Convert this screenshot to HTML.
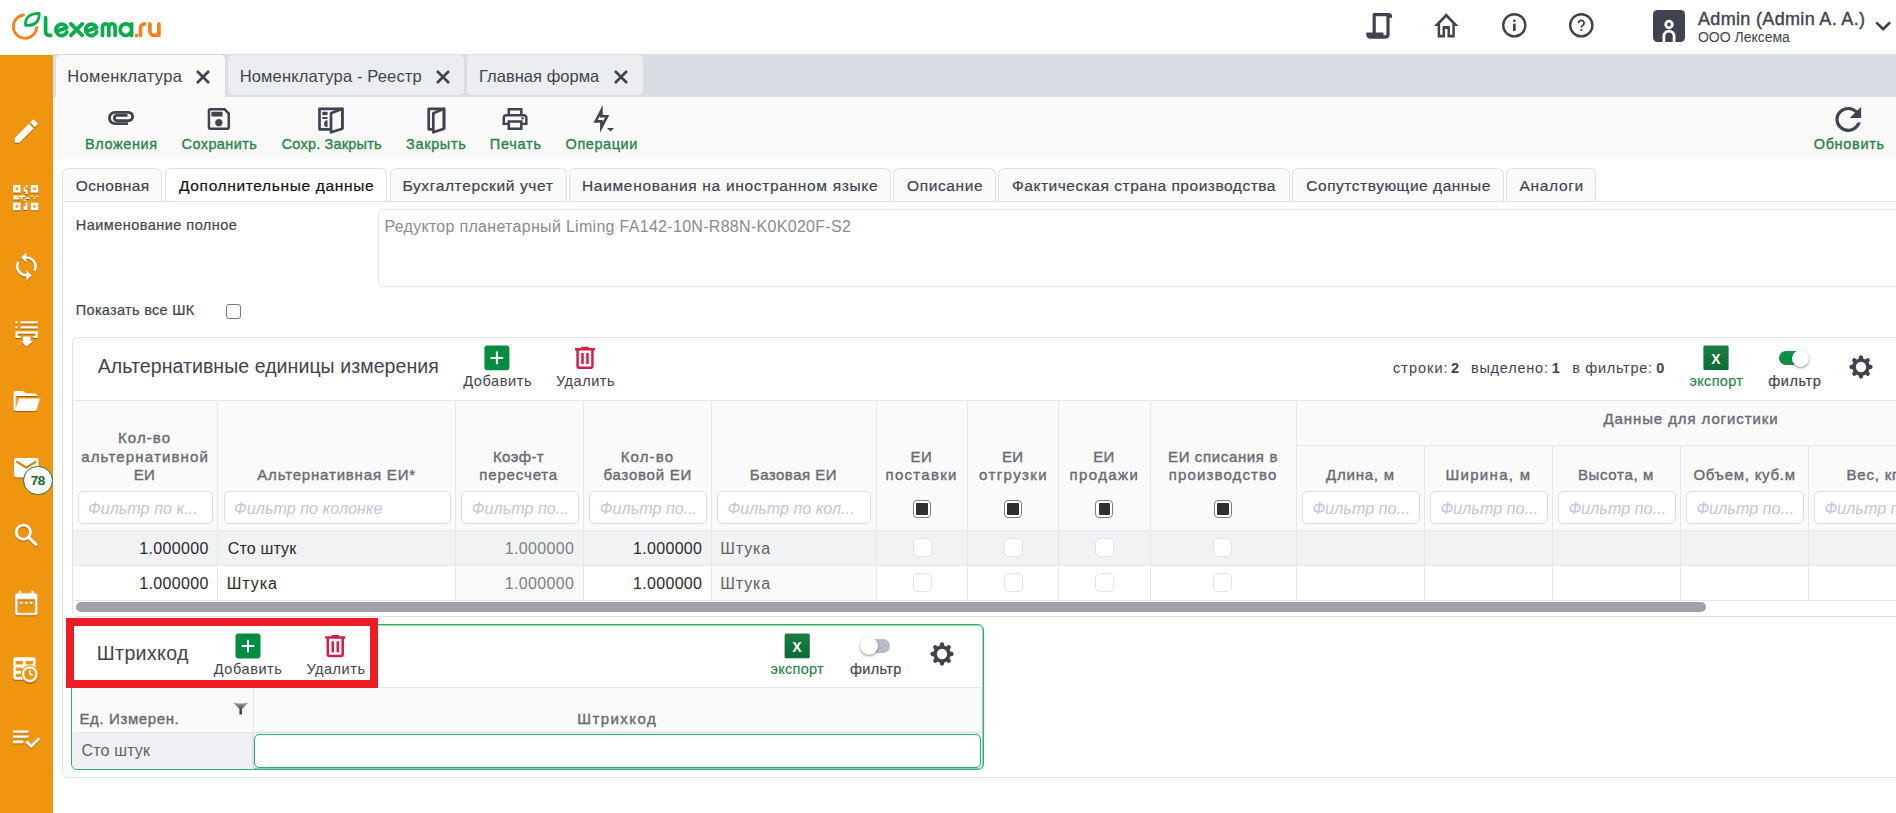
<!DOCTYPE html>
<html lang="ru">
<head>
<meta charset="utf-8">
<title>Lexema</title>
<style>
*{box-sizing:border-box;margin:0;padding:0}
html,body{width:1896px;height:813px;overflow:hidden;background:#fff}
body{font-family:"Liberation Sans",sans-serif;color:#3f4350;position:relative;font-size:14px}
.a{position:absolute}
.t{position:absolute;white-space:nowrap;line-height:1}
svg{position:absolute;display:block;overflow:visible}
#side{left:0;top:55px;width:53px;height:758px;background:#f0950f}
#side svg{filter:drop-shadow(0.9px 1px 0.4px rgba(105,58,0,.6))}
#tabbar{left:53px;top:54px;width:1843px;height:43px;background:#dadde3}
.tab{position:absolute;top:55px;height:40px;border-radius:4.5px;background:#ecedf1}
.tab.act{background:#f9f9f9;height:42px;border-radius:4.5px 4.5px 0 0}
#tool{left:53px;top:97px;width:1843px;height:62px;background:#f9f9f9}
.st{position:absolute;top:168px;height:34px;border:1px solid #dfe1ea;border-bottom:none;border-radius:6px 6px 0 0;background:#fafafb}
.st.act{background:#fff}
.fi{position:absolute;height:33px;border:1px solid #dadde8;border-radius:5px;background:#fff}
.vl{position:absolute;width:1px;background:#e6e7ee}
.hl{position:absolute;height:1px;background:#e6e7ee}
.cb{position:absolute;width:19px;height:19px;border:1px solid #e1e3ea;border-radius:5px;background:#fff}
.hcb{position:absolute;width:18px;height:18px;border:1.3px solid #7d7d7d;border-radius:4px;background:#fff}
.hcb:after{content:"";position:absolute;left:2.2px;top:2.2px;right:2.2px;bottom:2.2px;background:#303030;border-radius:1px}
</style>
</head>
<body>
<div id="side" class="a">
<svg style="left:0;top:0" width="1" height="1"><path fill="#fff" transform="translate(10.87 60.87) scale(1.2778 1.2778)" d="M20.71,7.04C21.1,6.65 21.1,6 20.71,5.63L18.37,3.29C18,2.9 17.35,2.9 16.96,3.29L15.12,5.12L18.87,8.87M3,17.25V21H6.75L17.81,9.93L14.06,6.18L3,17.25Z"/></svg>
<svg style="left:13.4px;top:130.4px" width="25.4" height="25.4" viewBox="0 0 25.4 25.4"><g fill="#fff"><rect x="0" y="0" width="7.6" height="7.6"/><rect x="2.6" y="2.6" width="2.4" height="2.4" fill="#f0950f"/><rect x="17.7" y="0" width="7.6" height="7.6"/><rect x="20.3" y="2.6" width="2.4" height="2.4" fill="#f0950f"/><rect x="0" y="17.7" width="7.6" height="7.6"/><rect x="2.6" y="20.3" width="2.4" height="2.4" fill="#f0950f"/><rect x="17.7" y="17.7" width="7.6" height="7.6"/><rect x="20.3" y="20.3" width="2.4" height="2.4" fill="#f0950f"/><path d="M12.6 0.4h2.1v2.1h-2.1zM10.6 2.5h2v2.2h2v4.3h-2.1v-2.2h-1.9zM0.2 10.6h4.3v2h2v1.8H0.2zM5.5 10.6h6.5v1.7H9.4v2H7.7v-2H5.5zM12.4 12.5h4.2v1.6h-4.2zM10.5 14.5h2.3v1.8h-2.3zM18.2 10.6h1.7v1.7h-1.7zM20.6 12.6h1.7v1.7h-1.7zM23.2 10.6h1.7v1.7h-1.7zM12.4 17.5h2.1v7.4H10.5v-3.7h1.9z"/></g></svg>
<svg style="left:0;top:0" width="1" height="1"><path fill="#fff" transform="translate(10.65 196.12) scale(1.3125 1.2773)" d="M12,18A6,6 0 0,1 6,12C6,11 6.25,10.03 6.7,9.2L5.24,7.74C4.46,8.97 4,10.43 4,12A8,8 0 0,0 12,20V23L16,19L12,15M12,4V1L8,5L12,9V6A6,6 0 0,1 18,12C18,13 17.75,13.97 17.3,14.8L18.76,16.26C19.54,15.03 20,13.57 20,12A8,8 0 0,0 12,4Z"/></svg>
<svg style="left:0;top:0" width="1" height="1"><path fill="#fff" transform="translate(11 331) scale(1.2494 1.25)" d="M19,20H4C2.89,20 2,19.1 2,18V6C2,4.89 2.89,4 4,4H10L12,6H19A2,2 0 0,1 21,8H21L4,8V18L6.14,10H23.21L20.93,18.5C20.7,19.37 19.92,20 19,20Z"/></svg>
<svg style="left:0;top:0" width="1" height="1"><path fill="#fff" transform="translate(11.54 398.1) scale(1.23 1.225)" d="M20,8L12,13L4,8V6L12,11L20,6M20,4H4C2.89,4 2,4.89 2,6V18A2,2 0 0,0 4,20H20A2,2 0 0,0 22,18V6C22,4.89 21.1,4 20,4Z"/></svg>
<svg style="left:0;top:0" width="1" height="1"><circle cx="23.4" cy="477.20000000000005" r="7.1" fill="none" stroke="#fff" stroke-width="2.8"/><path d="M28.5 482.29999999999995L36.9 490.4" stroke="#fff" stroke-width="3.1"/></svg>
<svg style="left:0;top:0" width="1" height="1"><path fill="#fff" transform="translate(11.48 533.24) scale(1.2389 1.23)" d="M9 11H7v2h2v-2zm4 0h-2v2h2v-2zm4 0h-2v2h2v-2zm2-7h-1V2h-2v2H8V2H6v2H5c-1.11 0-1.99.9-1.99 2L3 20c0 1.1.89 2 2 2h14c1.1 0 2-.9 2-2V6c0-1.1-.9-2-2-2zm0 16H5V9h14v11z"/></svg>
<svg style="left:0;top:0" width="1" height="1"><path fill="#fff" transform="translate(10.41 667.91) scale(1.2952 1.2643)" d="M14 10H2v2h12v-2zm0-4H2v2h12V6zM2 16h8v-2H2v2zm19.5-4.5L23 13l-6.99 7-4.51-4.5L13 14l3.01 3 5.49-5.5z"/></svg>
<svg style="left:14.5px;top:265.5px" width="23.5" height="26" viewBox="0 0 23.5 26"><g fill="#fff"><rect x="0.4" y="0.3" width="2.2" height="2.2"/><rect x="5.5" y="0.3" width="17.3" height="2.2"/><rect x="0.4" y="5.3" width="2.2" height="2.2"/><rect x="5.5" y="5.3" width="17.3" height="2.2"/><path d="M0.4 10.2H22.8V17.1H17.9V14.9H20.3V12.7H2.9V14.9H5.8V17.1H0.4Z"/><path d="M8 15.4H15.6V20.3H17.9L11.7 25.7L5.8 20.3H8Z"/></g></svg>
<svg style="left:13.3px;top:602.3px" width="26" height="26" viewBox="0 0 26 26"><rect x="0.3" y="0.3" width="22.4" height="22.4" rx="2.2" fill="#fff"/><g fill="#f0950f"><rect x="2.8" y="4" width="7.1" height="3.4"/><rect x="12.9" y="4" width="7.1" height="3.4"/><rect x="2.8" y="10.6" width="6.5" height="3.2"/><rect x="2.8" y="16.8" width="5.3" height="3.2"/><circle cx="16.8" cy="17.1" r="9"/></g><circle cx="16.8" cy="17.1" r="6.8" fill="none" stroke="#fff" stroke-width="2.2"/><path d="M16.8 13V16.7L19.7 18.4" fill="none" stroke="#fff" stroke-width="1.6"/></svg>
<div class="a" style="left:23px;top:410.8px;width:29.5px;height:29.5px;border-radius:50%;background:#fff;border:1.3px solid #1b6e2d"></div>
</div>
<div id="tabbar" class="a"></div>
<div id="tool" class="a"></div>

<!-- TABS -->
<div class="tab act" style="left:56px;width:169px"></div>
<div class="tab" style="left:228px;width:236px"></div>
<div class="tab" style="left:467px;width:176px"></div>

<!-- SUBTABS -->
<div class="st" style="left:62px;width:100px"></div>
<div class="st act" style="left:165px;width:222px"></div>
<div class="st" style="left:390px;width:177px"></div>
<div class="st" style="left:569px;width:322px"></div>
<div class="st" style="left:893px;width:103px"></div>
<div class="st" style="left:998px;width:292px"></div>
<div class="st" style="left:1292px;width:212px"></div>
<div class="st" style="left:1506px;width:90px"></div>

<!-- CONTENT PANEL -->
<div class="a" style="left:62px;top:201px;width:1900px;height:577px;border:1px solid #dfe1ea;border-radius:0 0 0 6px;background:#fff"></div>
<!-- textarea -->
<div class="a" style="left:378px;top:209px;width:1600px;height:78px;border:1px solid #e3e5ec;border-radius:5px;background:#fff"></div>
<!-- checkbox -->
<div class="a" style="left:226px;top:303.5px;width:15px;height:15px;border:1.3px solid #767676;border-radius:3px;background:#fff"></div>

<!-- GRID 1 -->
<div class="a" style="left:72px;top:337px;width:1900px;height:280px;border:1px solid #dfe1ea;border-radius:6px;background:#fff"></div>
<div class="a" style="left:73px;top:400px;width:1823px;height:130px;background:#fafafa"></div>
<div class="a" style="left:73px;top:530px;width:1823px;height:35px;background:#f1f2f4"></div>
<div class="a" style="left:455px;top:565px;width:128px;height:35px;background:#f9f9fa"></div>
<div class="a" style="left:711px;top:565px;width:165px;height:35px;background:#f9f9fa"></div>
<div class="hl" style="left:73px;top:400px;width:1823px"></div>
<div class="hl" style="left:1296px;top:445px;width:600px"></div>
<div class="hl" style="left:73px;top:530px;width:1823px"></div>
<div class="hl" style="left:73px;top:565px;width:1823px"></div>
<div class="hl" style="left:73px;top:600px;width:1823px"></div>
<div class="vl" style="left:217px;top:401px;height:199px"></div>
<div class="vl" style="left:455px;top:401px;height:199px"></div>
<div class="vl" style="left:583px;top:401px;height:199px"></div>
<div class="vl" style="left:711px;top:401px;height:199px"></div>
<div class="vl" style="left:876px;top:401px;height:199px"></div>
<div class="vl" style="left:967px;top:401px;height:199px"></div>
<div class="vl" style="left:1058px;top:401px;height:199px"></div>
<div class="vl" style="left:1150px;top:401px;height:199px"></div>
<div class="vl" style="left:1296px;top:401px;height:199px"></div>
<div class="vl" style="left:1424px;top:446px;height:154px"></div>
<div class="vl" style="left:1552px;top:446px;height:154px"></div>
<div class="vl" style="left:1680px;top:446px;height:154px"></div>
<div class="vl" style="left:1808px;top:446px;height:154px"></div>
<!-- scrollbar -->
<div class="a" style="left:76px;top:602px;width:1630px;height:10px;border-radius:5px;background:#9fa2ac"></div>
<div class="fi" style="left:78.0px;top:491px;width:135.0px"></div>
<div class="fi" style="left:224.0px;top:491px;width:226.5px"></div>
<div class="fi" style="left:461.0px;top:491px;width:118.0px"></div>
<div class="fi" style="left:589.0px;top:491px;width:118.0px"></div>
<div class="fi" style="left:717.0px;top:491px;width:154.0px"></div>
<div class="fi" style="left:1302.0px;top:491px;width:118.0px"></div>
<div class="fi" style="left:1430.0px;top:491px;width:118.0px"></div>
<div class="fi" style="left:1558.0px;top:491px;width:118.0px"></div>
<div class="fi" style="left:1686.0px;top:491px;width:118.0px"></div>
<div class="fi" style="left:1814.0px;top:491px;width:118.0px"></div>
<div class="hcb" style="left:913.0px;top:500.3px"></div>
<div class="cb" style="left:912.5px;top:538.3px"></div>
<div class="cb" style="left:912.5px;top:573.3px"></div>
<div class="hcb" style="left:1004.2px;top:500.3px"></div>
<div class="cb" style="left:1003.7px;top:538.3px"></div>
<div class="cb" style="left:1003.7px;top:573.3px"></div>
<div class="hcb" style="left:1095.4px;top:500.3px"></div>
<div class="cb" style="left:1094.9px;top:538.3px"></div>
<div class="cb" style="left:1094.9px;top:573.3px"></div>
<div class="hcb" style="left:1213.8px;top:500.3px"></div>
<div class="cb" style="left:1213.3px;top:538.3px"></div>
<div class="cb" style="left:1213.3px;top:573.3px"></div>

<!-- GRID 2 (barcode) -->
<div class="a" style="left:71px;top:624px;width:913px;height:146px;border:1px solid #2fae67;border-radius:6px;background:#fff;box-shadow:inset 0 0 0 0.45px #2fae67"></div>
<div class="a" style="left:72px;top:688px;width:909px;height:45px;background:#fafafa"></div>
<div class="a" style="left:72px;top:733px;width:182px;height:36px;background:#f0f1f4;border-radius:0 0 0 5px"></div>
<div class="hl" style="left:73px;top:687px;width:908px"></div>
<div class="hl" style="left:73px;top:732px;width:908px"></div>
<div class="vl" style="left:253px;top:688px;height:80px"></div>
<div class="vl" style="left:981px;top:688px;height:45px"></div>
<div class="a" style="left:254px;top:733.5px;width:727px;height:34px;border:1.3px solid #2fae67;border-radius:5px;background:#fff;box-shadow:0 0 0 2.5px rgba(120,150,220,.13), inset 0 0 3px rgba(120,150,220,.25)"></div>
<!-- red highlight -->
<div class="a" style="left:66px;top:618px;width:312px;height:70px;border:8px solid #ec1c24"></div>

<svg style="left:12px;top:11px" width="152" height="31" viewBox="0 0 152 31">
<g fill="none" stroke-linecap="round" stroke-linejoin="round">
<path d="M11.5 4A11.7 11.7 0 1 0 24.7 16.5" stroke="#f58220" stroke-width="2.8"/>
<path d="M13.6 14.3C12.6 7 17.2 2.6 27.2 2.4C27.7 10 23 15.4 13.6 14.3Z" stroke="#0bab4d" stroke-width="2.8"/>
<g stroke="#0bab4d" stroke-width="3.7">
<path d="M33.6 6.7V20.6Q33.6 24.4 37.4 24.4H38.6"/>
<path d="M44 20.6L54.8 16.7A5.7 5.7 0 1 0 54.9 20.9"/>
<path d="M58.9 12.9L70.3 24.4M70.3 12.9L58.9 24.4"/>
<path d="M73.8 20.6L84.6 16.7A5.7 5.7 0 1 0 84.7 20.9"/>
<path d="M90.5 24.4V16A3.15 3.15 0 0 1 96.8 16V24.4M96.8 16A3.15 3.15 0 0 1 103.1 16V24.4"/>
<path d="M119.6 12.9V24.4M119.6 18.6A5.7 5.7 0 1 0 119.6 18.7"/>
</g>
<g stroke="#f58220" stroke-width="3.7">
<path d="M128.5 24.4V17.1A4.2 4.2 0 0 1 132.6 12.9"/>
<path d="M137.9 12.9V19.9A4.5 4.5 0 0 0 146.9 19.9M146.9 12.9V24.4"/>
</g></g>
<rect x="122.8" y="22.8" width="3.3" height="3.5" fill="#f58220"/>
</svg>
<svg style="left:1366px;top:13px" width="26.5" height="25.5" viewBox="0 0 26.5 25.5"><g fill="none" stroke="#40434f" stroke-width="3.2" stroke-linejoin="round" stroke-linecap="round"><path d="M24.6 3.5A1.8 1.8 0 0 0 22.8 1.7H8.2V19.5"/><path d="M22 1.7V21.5A2.3 2.3 0 0 1 19.7 23.8H4"/></g><path d="M0.3 19.5H17.5V21.5A2.3 2.3 0 0 0 19.8 23.8V25.4H4.3A4 4 0 0 1 0.3 21.4Z" fill="#40434f"/></svg>
<svg style="left:0;top:0" width="1" height="1"><path fill="#40434f" transform="translate(1431.55 9.03) scale(1.225 1.4235)" d="M12 5.69L17 10.19V18H15V12H9V18H7V10.19L12 5.69M12 3L2 12H5V20H11V14H13V20H19V12H22"/></svg>
<svg style="left:1501.7px;top:13.3px" width="24.6" height="24.6" viewBox="0 0 24.6 24.6"><circle cx="12.3" cy="12.3" r="11.1" fill="none" stroke="#40434f" stroke-width="2.4"/><rect x="11" y="10.6" width="2.7" height="7.4" fill="#40434f"/><rect x="11" y="6.4" width="2.7" height="2.7" rx="1.3" fill="#40434f"/></svg>
<svg style="left:1568.8px;top:13.3px" width="24.6" height="24.6" viewBox="0 0 24.6 24.6"><circle cx="12.3" cy="12.3" r="11.1" fill="none" stroke="#40434f" stroke-width="2.4"/><path d="M9.6 10.2A2.7 2.7 0 1 1 13.6 12.4C12.6 13 12.3 13.5 12.3 14.6" fill="none" stroke="#40434f" stroke-width="1.7"/><rect x="11.4" y="16" width="1.8" height="1.9" fill="#40434f"/></svg>
<div class="a" style="left:1653px;top:10px;width:32px;height:32px;border-radius:4.5px;background:#40434f"></div>
<svg style="left:1653px;top:10px" width="32" height="32" viewBox="0 0 32 32"><g fill="none" stroke="#fff" stroke-width="2.8"><circle cx="16" cy="14.5" r="3.3"/><path d="M10.9 32V26.2a5.1 5.1 0 0 1 10.2 0V32"/></g></svg>
<svg style="left:0;top:0" width="1" height="1"><path fill="#40434f" transform="translate(1867.45 10.3) scale(1.3083 1.2938)" d="M7.41,8.58L12,13.17L16.59,8.58L18,10L12,16L6,10L7.41,8.58Z"/></svg>
<svg style="left:196.4px;top:69.5px" width="14" height="14" viewBox="0 0 14 14"><path d="M1 1L13 13M13 1L1 13" stroke="#40434f" stroke-width="2.7" fill="none"/></svg>
<svg style="left:436.4px;top:69.5px" width="14" height="14" viewBox="0 0 14 14"><path d="M1 1L13 13M13 1L1 13" stroke="#40434f" stroke-width="2.7" fill="none"/></svg>
<svg style="left:614.2px;top:69.5px" width="14" height="14" viewBox="0 0 14 14"><path d="M1 1L13 13M13 1L1 13" stroke="#40434f" stroke-width="2.7" fill="none"/></svg>
<svg style="left:108px;top:111px" width="26" height="14" viewBox="0 0 26 14"><path d="M20 12.6H7A5.6 5.6 0 0 1 7 1.4H20.5A4.1 4.1 0 0 1 20.5 9.6H9A2.6 2.6 0 0 1 9 4.4H19.5" fill="none" stroke="#40434f" stroke-width="2.8"/></svg>
<svg style="left:0;top:0" width="1" height="1"><path fill="#40434f" transform="translate(203.98 104.33) scale(1.2389 1.2222)" d="M17 3H5C3.89 3 3 3.9 3 5V19C3 20.1 3.89 21 5 21H19C20.1 21 21 20.1 21 19V7L17 3M19 19H5V5H16.17L19 7.83V19M12 12C10.34 12 9 13.34 9 15S10.34 18 12 18 15 16.66 15 15 13.66 12 12 12M6 6H15V10H6V6Z"/></svg>
<svg style="left:318px;top:106.5px" width="26" height="26.5" viewBox="0 0 26 26.5"><g fill="none" stroke="#40434f" stroke-width="2.7" stroke-linejoin="round"><path d="M12.5 22.3H1.5V1.8H24.3V21.8"/><path d="M13 6.3L24.3 1.8V21.8L13 25.3Z" fill="#f9f9f9"/></g><g fill="#40434f"><rect x="4.3" y="4.8" width="5.2" height="3.4"/><rect x="4.3" y="10" width="5.2" height="2"/><path d="M9.5 13.3a3.4 3.4 0 0 0 0 6.8z"/></g></svg>
<svg style="left:426.5px;top:106.5px" width="19" height="26.5" viewBox="0 0 19 26.5"><g fill="none" stroke="#40434f" stroke-width="2.7" stroke-linejoin="round"><path d="M6 22.3H1.7V1.8H17V21.8"/><path d="M6.3 6.3L17 1.8V21.8L6.3 25.3Z"/></g></svg>
<svg style="left:0;top:0" width="1" height="1"><path fill="#40434f" transform="translate(499.99 104.33) scale(1.255 1.2222)" d="M19 8C20.66 8 22 9.34 22 11V17H18V21H6V17H2V11C2 9.34 3.34 8 5 8H6V3H18V8H19M8 5V8H16V5H8M16 19V15H8V19H16M18 15H20V11C20 10.45 19.55 10 19 10H5C4.45 10 4 10.45 4 11V15H6V13H18V15M19 11.5C19 12.05 18.55 12.5 18 12.5C17.45 12.5 17 12.05 17 11.5C17 10.95 17.45 10.5 18 10.5C18.55 10.5 19 10.95 19 11.5Z"/></svg>
<svg style="left:0;top:0" width="1" height="1"><path fill="#40434f" transform="translate(585.6 103.74) scale(1.3167 1.2591)" d="M11 9.47V11H14.76L13 14.53V13H9.24L11 9.47M13 1L6 15H11V23L18 9H13V1Z"/></svg>
<svg style="left:607px;top:128px" width="7" height="3.5" viewBox="0 0 7 3.5"><path d="M0 0H7L3.5 3.5Z" fill="#40434f"/></svg>
<svg style="left:0;top:0" width="1" height="1"><path fill="#40434f" transform="translate(1828.98 100.62) scale(1.6062 1.5687)" d="M17.65,6.35C16.2,4.9 14.21,4 12,4A8,8 0 0,0 4,12A8,8 0 0,0 12,20C15.73,20 18.84,17.45 19.73,14H17.65C16.83,16.33 14.61,18 12,18A6,6 0 0,1 6,12A6,6 0 0,1 12,6C13.66,6 15.14,6.69 16.22,7.78L13,11H20V4L17.65,6.35Z"/></svg>
<svg style="left:484px;top:345px" width="27" height="27" viewBox="0 0 27 27"><g transform="translate(0.4 0.5)"><rect width="25" height="24.8" rx="3" fill="#048c42"/><path d="M6.2 12.4H18.8M12.5 6.1V18.7" stroke="#fff" stroke-width="2"/></g></svg>
<svg style="left:235px;top:633px" width="27" height="27" viewBox="0 0 27 27"><g transform="translate(0.5 0.6)"><rect width="25" height="24.8" rx="3" fill="#048c42"/><path d="M6.2 12.4H18.8M12.5 6.1V18.7" stroke="#fff" stroke-width="2"/></g></svg>
<svg style="left:0;top:0" width="1" height="1"><path fill="#d81b48" transform="translate(570.15 342.97) scale(1.2375 1.2444)" d="M9,3V4H4V6H5V19A2,2 0 0,0 7,21H17A2,2 0 0,0 19,19V6H20V4H15V3H9M7,6H17V19H7V6M9,8V17H11V8H9M13,8V17H15V8H13Z"/></svg>
<svg style="left:0;top:0" width="1" height="1"><path fill="#d81b48" transform="translate(320.33 631.28) scale(1.2437 1.2389)" d="M9,3V4H4V6H5V19A2,2 0 0,0 7,21H17A2,2 0 0,0 19,19V6H20V4H15V3H9M7,6H17V19H7V6M9,8V17H11V8H9M13,8V17H15V8H13Z"/></svg>
<svg style="left:1703px;top:345px" width="27" height="27" viewBox="0 0 27 27"><defs><linearGradient id="g1703" x1="0" y1="0" x2="0" y2="1"><stop offset="0" stop-color="#1b7d44"/><stop offset="1" stop-color="#0c6b38"/></linearGradient></defs><rect x="0.4" y="0.4" width="25.2" height="24.7" rx="1.5" fill="url(#g1703)"/></svg>
<svg style="left:784px;top:633px" width="27" height="27" viewBox="0 0 27 27"><defs><linearGradient id="g784" x1="0" y1="0" x2="0" y2="1"><stop offset="0" stop-color="#1b7d44"/><stop offset="1" stop-color="#0c6b38"/></linearGradient></defs><rect x="0.6" y="0.6" width="25.2" height="24.7" rx="1.5" fill="url(#g784)"/></svg>
<div class="a" style="left:1779px;top:351.2px;width:28px;height:14.2px;border-radius:7.1px;background:linear-gradient(90deg,#0a8c43,#13964d)"></div>
<div class="a" style="left:1791.6px;top:349.7px;width:17.3px;height:17.3px;border-radius:50%;background:#fff;box-shadow:0 1px 2.5px rgba(0,0,0,.45)"></div>
<div class="a" style="left:862px;top:639px;width:28px;height:13.5px;border-radius:7px;background:#b9bcc6"></div>
<div class="a" style="left:859.5px;top:636.5px;width:18px;height:18px;border-radius:50%;background:#fff;box-shadow:0 1px 2.5px rgba(0,0,0,.45)"></div>
<svg style="left:1861px;top:366.9px" width="1" height="1"><g fill="none" stroke="#40434f"><circle r="7" stroke-width="3.7"/><g stroke-width="4.3" stroke-linecap="round"><path d="M0 -8.6V-9.5" transform="rotate(0)"/><path d="M0 -8.6V-9.5" transform="rotate(45)"/><path d="M0 -8.6V-9.5" transform="rotate(90)"/><path d="M0 -8.6V-9.5" transform="rotate(135)"/><path d="M0 -8.6V-9.5" transform="rotate(180)"/><path d="M0 -8.6V-9.5" transform="rotate(225)"/><path d="M0 -8.6V-9.5" transform="rotate(270)"/><path d="M0 -8.6V-9.5" transform="rotate(315)"/></g></g></svg>
<svg style="left:941.9px;top:654px" width="1" height="1"><g fill="none" stroke="#40434f"><circle r="7" stroke-width="3.7"/><g stroke-width="4.3" stroke-linecap="round"><path d="M0 -8.6V-9.5" transform="rotate(0)"/><path d="M0 -8.6V-9.5" transform="rotate(45)"/><path d="M0 -8.6V-9.5" transform="rotate(90)"/><path d="M0 -8.6V-9.5" transform="rotate(135)"/><path d="M0 -8.6V-9.5" transform="rotate(180)"/><path d="M0 -8.6V-9.5" transform="rotate(225)"/><path d="M0 -8.6V-9.5" transform="rotate(270)"/><path d="M0 -8.6V-9.5" transform="rotate(315)"/></g></g></svg>
<svg style="left:232.8px;top:702.2px" width="15.4" height="12.8" viewBox="0 0 15.4 12.8"><defs><linearGradient id="fg" x1="0" y1="0" x2="0" y2="1"><stop offset="0" stop-color="#a4a7ac"/><stop offset="0.45" stop-color="#5b5e64"/><stop offset="1" stop-color="#2f3237"/></linearGradient></defs><path d="M0.2 0.4Q7.7 2.6 15.2 0.4L9 6.9V12.6H6.4V6.9Z" fill="url(#fg)"/></svg>
<span class="t" style="left:1698.0px;top:9.7px;font-size:18px;color:#3f4350;letter-spacing:0.33px;-webkit-text-stroke:0.4px currentColor;">Admin (Admin A. A.)</span>
<span class="t" style="left:1698.0px;top:30.1px;font-size:14px;color:#3f4350;letter-spacing:-0.02px;">ООО Лексема</span>
<span class="t" style="left:67.3px;top:68.0px;font-size:16.5px;color:#3f4350;letter-spacing:0.36px;">Номенклатура</span>
<span class="t" style="left:239.7px;top:68.0px;font-size:16.5px;color:#3f4350;letter-spacing:0.15px;">Номенклатура - Реестр</span>
<span class="t" style="left:479.0px;top:68.0px;font-size:16.5px;color:#3f4350;letter-spacing:0.03px;">Главная форма</span>
<span class="t" style="left:85.0px;top:137.3px;font-size:14.5px;color:#2b8447;letter-spacing:0.59px;-webkit-text-stroke:0.35px currentColor;">Вложения</span>
<span class="t" style="left:181.6px;top:137.3px;font-size:14.5px;color:#2b8447;letter-spacing:0.39px;-webkit-text-stroke:0.35px currentColor;">Сохранить</span>
<span class="t" style="left:281.7px;top:137.3px;font-size:14.5px;color:#2b8447;letter-spacing:0.19px;-webkit-text-stroke:0.35px currentColor;">Сохр. Закрыть</span>
<span class="t" style="left:406.1px;top:137.3px;font-size:14.5px;color:#2b8447;letter-spacing:0.63px;-webkit-text-stroke:0.35px currentColor;">Закрыть</span>
<span class="t" style="left:489.7px;top:137.3px;font-size:14.5px;color:#2b8447;letter-spacing:0.77px;-webkit-text-stroke:0.35px currentColor;">Печать</span>
<span class="t" style="left:565.6px;top:137.3px;font-size:14.5px;color:#2b8447;letter-spacing:0.55px;-webkit-text-stroke:0.35px currentColor;">Операции</span>
<span class="t" style="left:1813.7px;top:137.3px;font-size:14.5px;color:#2b8447;letter-spacing:0.67px;-webkit-text-stroke:0.35px currentColor;">Обновить</span>
<span class="t" style="left:75.7px;top:178.2px;font-size:15.5px;color:#3f4350;letter-spacing:0.39px;-webkit-text-stroke:0.2px currentColor;">Основная</span>
<span class="t" style="left:179.0px;top:178.2px;font-size:15.5px;color:#111;letter-spacing:0.65px;-webkit-text-stroke:0.2px currentColor;">Дополнительные данные</span>
<span class="t" style="left:402.5px;top:178.2px;font-size:15.5px;color:#3f4350;letter-spacing:0.63px;-webkit-text-stroke:0.2px currentColor;">Бухгалтерский учет</span>
<span class="t" style="left:582.0px;top:178.2px;font-size:15.5px;color:#3f4350;letter-spacing:0.68px;-webkit-text-stroke:0.2px currentColor;">Наименования на иностранном языке</span>
<span class="t" style="left:907.0px;top:178.2px;font-size:15.5px;color:#3f4350;letter-spacing:0.61px;-webkit-text-stroke:0.2px currentColor;">Описание</span>
<span class="t" style="left:1012.0px;top:178.2px;font-size:15.5px;color:#3f4350;letter-spacing:0.52px;-webkit-text-stroke:0.2px currentColor;">Фактическая страна производства</span>
<span class="t" style="left:1306.3px;top:178.2px;font-size:15.5px;color:#3f4350;letter-spacing:0.53px;-webkit-text-stroke:0.2px currentColor;">Сопутствующие данные</span>
<span class="t" style="left:1519.4px;top:178.2px;font-size:15.5px;color:#3f4350;letter-spacing:0.70px;-webkit-text-stroke:0.2px currentColor;">Аналоги</span>
<span class="t" style="left:75.8px;top:218.1px;font-size:14.5px;color:#3f4350;letter-spacing:0.46px;-webkit-text-stroke:0.2px currentColor;">Наименование полное</span>
<span class="t" style="left:384.4px;top:218.9px;font-size:16px;color:#8b8b8b;letter-spacing:0.30px;">Редуктор планетарный Liming FA142-10N-R88N-K0K020F-S2</span>
<span class="t" style="left:75.8px;top:302.5px;font-size:14.5px;color:#3f4350;letter-spacing:0.30px;-webkit-text-stroke:0.2px currentColor;">Показать все ШК</span>
<span class="t" style="left:97.8px;top:356.8px;font-size:19.5px;color:#3f4350;letter-spacing:0.07px;">Альтернативные единицы измерения</span>
<span class="t" style="left:463.3px;top:373.9px;font-size:14.5px;color:#3f4350;letter-spacing:0.58px;">Добавить</span>
<span class="t" style="left:556.0px;top:373.9px;font-size:14.5px;color:#3f4350;letter-spacing:0.53px;">Удалить</span>
<span class="t" style="left:1393.0px;top:360.9px;font-size:14.5px;color:#3f4350;letter-spacing:1.01px;">строки:</span>
<span class="t" style="left:1451.0px;top:360.9px;font-size:14.5px;color:#3f4350;letter-spacing:0.00px;font-weight:bold;">2</span>
<span class="t" style="left:1470.9px;top:360.9px;font-size:14.5px;color:#3f4350;letter-spacing:0.79px;">выделено:</span>
<span class="t" style="left:1551.8px;top:360.9px;font-size:14.5px;color:#3f4350;letter-spacing:0.00px;font-weight:bold;">1</span>
<span class="t" style="left:1572.2px;top:360.9px;font-size:14.5px;color:#3f4350;letter-spacing:0.71px;">в фильтре:</span>
<span class="t" style="left:1656.2px;top:360.9px;font-size:14.5px;color:#3f4350;letter-spacing:0.00px;font-weight:bold;">0</span>
<span class="t" style="left:1689.5px;top:374.1px;font-size:14.5px;color:#2b8447;letter-spacing:0.33px;-webkit-text-stroke:0.2px currentColor;">экспорт</span>
<span class="t" style="left:1768.3px;top:373.7px;font-size:14.5px;color:#3f4350;letter-spacing:0.57px;-webkit-text-stroke:0.2px currentColor;">фильтр</span>
<span class="t" style="left:117.9px;top:429.7px;font-size:15px;color:#686b73;letter-spacing:1.12px;-webkit-text-stroke:0.38px currentColor;">Кол-во</span>
<span class="t" style="left:81.2px;top:448.9px;font-size:15px;color:#686b73;letter-spacing:1.16px;-webkit-text-stroke:0.38px currentColor;">альтернативной</span>
<span class="t" style="left:133.8px;top:466.7px;font-size:15px;color:#686b73;letter-spacing:0.20px;-webkit-text-stroke:0.38px currentColor;">ЕИ</span>
<span class="t" style="left:257.3px;top:466.7px;font-size:15px;color:#686b73;letter-spacing:0.82px;-webkit-text-stroke:0.38px currentColor;">Альтернативная ЕИ*</span>
<span class="t" style="left:493.0px;top:448.5px;font-size:15px;color:#686b73;letter-spacing:0.35px;-webkit-text-stroke:0.38px currentColor;">Коэф-т</span>
<span class="t" style="left:479.3px;top:467.2px;font-size:15px;color:#686b73;letter-spacing:0.84px;-webkit-text-stroke:0.38px currentColor;">пересчета</span>
<span class="t" style="left:620.7px;top:448.5px;font-size:15px;color:#686b73;letter-spacing:1.14px;-webkit-text-stroke:0.38px currentColor;">Кол-во</span>
<span class="t" style="left:603.6px;top:466.7px;font-size:15px;color:#686b73;letter-spacing:0.74px;-webkit-text-stroke:0.38px currentColor;">базовой ЕИ</span>
<span class="t" style="left:749.8px;top:466.7px;font-size:15px;color:#686b73;letter-spacing:0.50px;-webkit-text-stroke:0.38px currentColor;">Базовая ЕИ</span>
<span class="t" style="left:910.6px;top:448.5px;font-size:15px;color:#686b73;letter-spacing:0.50px;-webkit-text-stroke:0.38px currentColor;">ЕИ</span>
<span class="t" style="left:885.5px;top:467.2px;font-size:15px;color:#686b73;letter-spacing:1.29px;-webkit-text-stroke:0.38px currentColor;">поставки</span>
<span class="t" style="left:1002.1px;top:448.5px;font-size:15px;color:#686b73;letter-spacing:0.20px;-webkit-text-stroke:0.38px currentColor;">ЕИ</span>
<span class="t" style="left:979.1px;top:467.2px;font-size:15px;color:#686b73;letter-spacing:1.39px;-webkit-text-stroke:0.38px currentColor;">отгрузки</span>
<span class="t" style="left:1093.3px;top:448.5px;font-size:15px;color:#686b73;letter-spacing:0.20px;-webkit-text-stroke:0.38px currentColor;">ЕИ</span>
<span class="t" style="left:1069.6px;top:467.2px;font-size:15px;color:#686b73;letter-spacing:1.38px;-webkit-text-stroke:0.38px currentColor;">продажи</span>
<span class="t" style="left:1168.0px;top:448.5px;font-size:15px;color:#686b73;letter-spacing:0.64px;-webkit-text-stroke:0.38px currentColor;">ЕИ списания в</span>
<span class="t" style="left:1168.7px;top:467.2px;font-size:15px;color:#686b73;letter-spacing:1.14px;-webkit-text-stroke:0.38px currentColor;">производство</span>
<span class="t" style="left:1603.5px;top:410.7px;font-size:15px;color:#686b73;letter-spacing:0.90px;-webkit-text-stroke:0.38px currentColor;">Данные для логистики</span>
<span class="t" style="left:1326.0px;top:466.7px;font-size:15px;color:#686b73;letter-spacing:0.79px;-webkit-text-stroke:0.38px currentColor;">Длина, м</span>
<span class="t" style="left:1445.5px;top:466.7px;font-size:15px;color:#686b73;letter-spacing:1.30px;-webkit-text-stroke:0.38px currentColor;">Ширина, м</span>
<span class="t" style="left:1577.9px;top:466.7px;font-size:15px;color:#686b73;letter-spacing:0.67px;-webkit-text-stroke:0.38px currentColor;">Высота, м</span>
<span class="t" style="left:1693.4px;top:466.7px;font-size:15px;color:#686b73;letter-spacing:0.73px;-webkit-text-stroke:0.38px currentColor;">Объем, куб.м</span>
<span class="t" style="left:1846.5px;top:466.7px;font-size:15px;color:#686b73;letter-spacing:0.79px;-webkit-text-stroke:0.38px currentColor;">Вес, кг</span>
<span class="t" style="left:87.9px;top:500.5px;font-size:16px;color:#c1c6d5;letter-spacing:0.10px;font-style:italic;">Фильтр по к...</span>
<span class="t" style="left:234.0px;top:500.5px;font-size:16px;color:#c1c6d5;letter-spacing:0.09px;font-style:italic;">Фильтр по колонке</span>
<span class="t" style="left:471.8px;top:500.5px;font-size:16px;color:#c1c6d5;letter-spacing:0.08px;font-style:italic;">Фильтр по...</span>
<span class="t" style="left:599.8px;top:500.5px;font-size:16px;color:#c1c6d5;letter-spacing:0.08px;font-style:italic;">Фильтр по...</span>
<span class="t" style="left:727.5px;top:500.5px;font-size:16px;color:#c1c6d5;letter-spacing:0.05px;font-style:italic;">Фильтр по кол...</span>
<span class="t" style="left:1312.4px;top:500.5px;font-size:16px;color:#c1c6d5;letter-spacing:0.11px;font-style:italic;">Фильтр по...</span>
<span class="t" style="left:1440.4px;top:500.5px;font-size:16px;color:#c1c6d5;letter-spacing:0.11px;font-style:italic;">Фильтр по...</span>
<span class="t" style="left:1568.4px;top:500.5px;font-size:16px;color:#c1c6d5;letter-spacing:0.11px;font-style:italic;">Фильтр по...</span>
<span class="t" style="left:1696.4px;top:500.5px;font-size:16px;color:#c1c6d5;letter-spacing:0.11px;font-style:italic;">Фильтр по...</span>
<span class="t" style="left:1824.4px;top:500.5px;font-size:16px;color:#c1c6d5;letter-spacing:0.11px;font-style:italic;">Фильтр по...</span>
<span class="t" style="left:139.3px;top:541.2px;font-size:16px;color:#2a2a2a;letter-spacing:0.35px;">1.000000</span>
<span class="t" style="left:504.8px;top:541.2px;font-size:16px;color:#808080;letter-spacing:0.35px;">1.000000</span>
<span class="t" style="left:632.9px;top:541.2px;font-size:16px;color:#2a2a2a;letter-spacing:0.34px;">1.000000</span>
<span class="t" style="left:720.3px;top:541.2px;font-size:16px;color:#626262;letter-spacing:0.87px;">Штука</span>
<span class="t" style="left:139.3px;top:576.2px;font-size:16px;color:#2a2a2a;letter-spacing:0.35px;">1.000000</span>
<span class="t" style="left:504.8px;top:576.2px;font-size:16px;color:#808080;letter-spacing:0.35px;">1.000000</span>
<span class="t" style="left:632.9px;top:576.2px;font-size:16px;color:#2a2a2a;letter-spacing:0.34px;">1.000000</span>
<span class="t" style="left:720.3px;top:576.2px;font-size:16px;color:#626262;letter-spacing:0.87px;">Штука</span>
<span class="t" style="left:227.8px;top:541.2px;font-size:16px;color:#2a2a2a;letter-spacing:0.14px;">Сто штук</span>
<span class="t" style="left:226.8px;top:576.2px;font-size:16px;color:#2a2a2a;letter-spacing:0.89px;">Штука</span>
<span class="t" style="left:96.8px;top:643.8px;font-size:19.5px;color:#3f4350;letter-spacing:0.39px;">Штрихкод</span>
<span class="t" style="left:213.8px;top:661.9px;font-size:14.5px;color:#3f4350;letter-spacing:0.57px;">Добавить</span>
<span class="t" style="left:306.4px;top:661.9px;font-size:14.5px;color:#3f4350;letter-spacing:0.53px;">Удалить</span>
<span class="t" style="left:770.6px;top:662.4px;font-size:14.5px;color:#2b8447;letter-spacing:0.28px;-webkit-text-stroke:0.2px currentColor;">экспорт</span>
<span class="t" style="left:850.0px;top:662.1px;font-size:14.5px;color:#3f4350;letter-spacing:0.35px;-webkit-text-stroke:0.2px currentColor;">фильтр</span>
<span class="t" style="left:79.5px;top:711.0px;font-size:15px;color:#686b73;letter-spacing:0.61px;-webkit-text-stroke:0.38px currentColor;">Ед. Измерен.</span>
<span class="t" style="left:577.2px;top:711.0px;font-size:15px;color:#686b73;letter-spacing:1.46px;-webkit-text-stroke:0.38px currentColor;">Штрихкод</span>
<span class="t" style="left:81.6px;top:742.8px;font-size:16px;color:#626262;letter-spacing:0.14px;">Сто штук</span>
<span class="t" style="left:1711.3px;top:351.6px;font-size:14px;color:#fff;letter-spacing:0.00px;font-weight:bold;">X</span>
<span class="t" style="left:792.3px;top:639.5px;font-size:14px;color:#fff;letter-spacing:0.00px;font-weight:bold;">X</span>
<span class="t" style="left:30.8px;top:474.3px;font-size:13.5px;color:#17692b;letter-spacing:-0.60px;font-weight:bold;">78</span>
</body>
</html>
